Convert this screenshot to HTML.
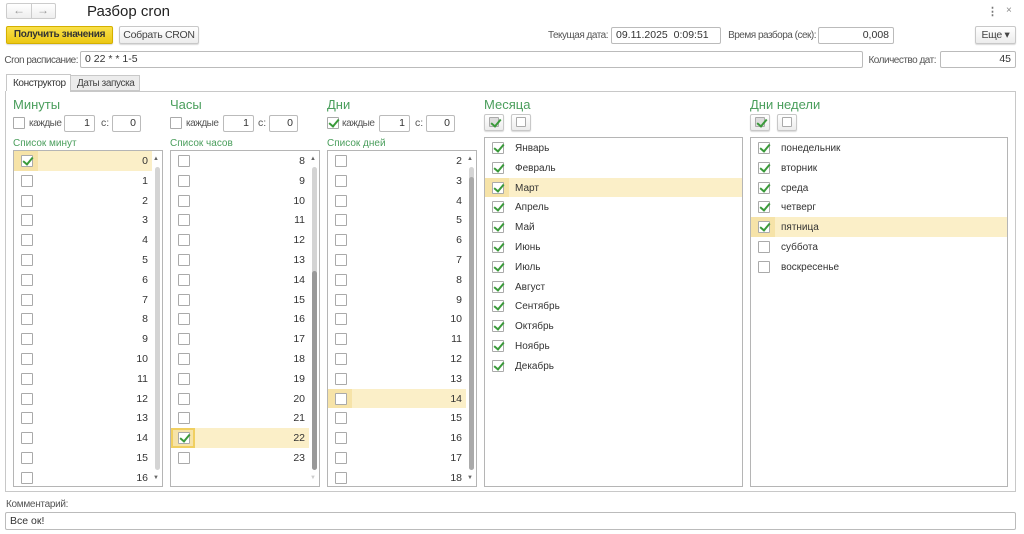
<!DOCTYPE html>
<html><head><meta charset="utf-8"><style>
*{box-sizing:border-box;margin:0;padding:0}
body{width:1024px;height:534px;background:#fff;font-family:"Liberation Sans",sans-serif;font-size:10.5px;color:#333;position:relative;overflow:hidden;white-space:nowrap}
.a{position:absolute}
.inp{position:absolute;border:1px solid #bbb;border-radius:2px;background:#fff;height:17px;line-height:15px;padding:0 4px;color:#333}
.r{text-align:right}
.lab{position:absolute;color:#555;text-align:right;font-size:10px;letter-spacing:-0.5px}
.kd{position:absolute;color:#555;font-size:10px;letter-spacing:-0.5px;top:118px}
.btn{position:absolute;border:1px solid #c8c8c8;border-radius:2px;background:linear-gradient(#fff,#ececec);height:18px;line-height:16px;text-align:center;color:#444;box-shadow:0 1px 1px rgba(0,0,0,.15);letter-spacing:-0.3px}
.g{position:absolute;color:#4a9e5c;font-size:13px}
.gs{position:absolute;color:#4a9e5c;font-size:10px}
.cb{position:absolute;width:12px;height:12px;border:1px solid #aaa;background:#fff;border-radius:1px}
.cb.c::after{content:"";position:absolute;left:3px;top:-1px;width:4px;height:8px;border:solid #3a9a3a;border-width:0 2px 2px 0;transform:rotate(40deg)}
.box{position:absolute;border:1px solid #b5b5b5;background:#fff;overflow:hidden}
.row{position:relative;height:19.8px}
.row .cb{left:7px;top:4px}
.row .n{position:absolute;right:14px;top:4px}
.row .t{position:absolute;left:30px;top:5px;font-size:10px}
.hl{background:#fbefc8}
.hl .cbc{position:absolute;left:0;top:0;width:24px;height:100%;background:#f6e3a8}
.sb{position:absolute;width:5px;border-radius:3px;background:#d4d4d4}
.sbd{background:#999}
.arr{position:absolute;font-size:6px;color:#666}
.ib{position:absolute;width:20px;height:17px;border:1px solid #c8c8c8;border-radius:2px;background:linear-gradient(#fff,#ececec);box-shadow:0 1px 1px rgba(0,0,0,.15)}
</style></head><body>
<div class="a" style="left:6px;top:3px;width:50px;height:16px;border:1px solid #ccc;border-radius:2px;background:linear-gradient(#fff,#eee)"></div>
<div class="a" style="left:31px;top:4px;width:1px;height:14px;background:#ccc"></div>
<div class="a" style="left:13px;top:3px;color:#999;font-size:12px">&#8592;</div>
<div class="a" style="left:37px;top:3px;color:#999;font-size:12px">&#8594;</div>
<div class="a" style="left:87px;top:3px;font-size:15px;color:#222">Разбор cron</div>
<div class="a" style="left:987px;top:5px;color:#777;font-size:11px;font-weight:bold">&#8942;</div>
<div class="a" style="left:1006px;top:5px;color:#888;font-size:10px">×</div>

<div class="btn" style="left:6px;top:26px;width:107px;background:linear-gradient(#f9e04a,#ecc814);border-color:#d4b000;color:#333;font-weight:bold;font-size:10px">Получить значения</div>
<div class="btn" style="left:119px;top:26px;width:80px">Собрать CRON</div>
<div class="lab" style="right:416px;top:30px">Текущая дата:</div>
<div class="inp" style="left:611px;top:27px;width:110px">09.11.2025&nbsp; 0:09:51</div>
<div class="lab" style="right:208px;top:30px">Время разбора (сек):</div>
<div class="inp r" style="left:818px;top:27px;width:76px">0,008</div>
<div class="btn" style="left:975px;top:26px;width:41px">Еще ▾</div>

<div class="lab" style="right:946px;top:55px">Cron расписание:</div>
<div class="inp" style="left:80px;top:51px;width:783px">0 22 * * 1-5</div>
<div class="lab" style="right:88px;top:55px">Количество дат:</div>
<div class="inp r" style="left:940px;top:51px;width:76px">45</div>

<div class="a" style="left:5px;top:91px;width:1011px;height:401px;border:1px solid #c8c8c8"></div>
<div class="a" style="left:6px;top:74px;width:65px;height:18px;border:1px solid #c8c8c8;border-bottom:none;background:#fff;padding:3px 0 0 6px;font-size:10px;letter-spacing:-0.4px">Конструктор</div>
<div class="a" style="left:70px;top:75px;width:70px;height:16px;border:1px solid #c8c8c8;background:#ececec;padding:2px 0 0 6px;color:#444;font-size:10px;letter-spacing:-0.4px">Даты запуска</div>
<div class="a" style="left:6px;top:91px;width:64px;height:1px;background:#fff"></div>

<div class="g" style="left:13px;top:97px">Минуты</div>
<div class="g" style="left:170px;top:97px">Часы</div>
<div class="g" style="left:327px;top:97px">Дни</div>
<div class="g" style="left:484px;top:97px">Месяца</div>
<div class="g" style="left:750px;top:97px">Дни недели</div>

<div class="cb" style="left:13px;top:117px"></div><div class="kd" style="left:29px">каждые</div>
<div class="inp r" style="left:64px;top:115px;width:31px">1</div><div class="a" style="left:101px;top:117px;color:#555">с:</div>
<div class="inp r" style="left:112px;top:115px;width:29px">0</div>
<div class="cb" style="left:170px;top:117px"></div><div class="kd" style="left:186px">каждые</div>
<div class="inp r" style="left:223px;top:115px;width:31px">1</div><div class="a" style="left:258px;top:117px;color:#555">с:</div>
<div class="inp r" style="left:269px;top:115px;width:29px">0</div>
<div class="cb c" style="left:327px;top:117px"></div><div class="kd" style="left:342px">каждые</div>
<div class="inp r" style="left:379px;top:115px;width:31px">1</div><div class="a" style="left:415px;top:117px;color:#555">с:</div>
<div class="inp r" style="left:426px;top:115px;width:29px">0</div>

<div class="ib" style="left:484px;top:114px"><div class="cb c" style="left:4px;top:2px;width:10px;height:10px;background:#ddd"></div></div>
<div class="ib" style="left:511px;top:114px"><div class="cb" style="left:4px;top:2px;width:10px;height:10px"></div></div>
<div class="ib" style="left:750px;top:114px"><div class="cb c" style="left:4px;top:2px;width:10px;height:10px;background:#ddd"></div></div>
<div class="ib" style="left:777px;top:114px"><div class="cb" style="left:4px;top:2px;width:10px;height:10px"></div></div>

<div class="gs" style="left:13px;top:138px">Список минут</div>
<div class="gs" style="left:170px;top:138px">Список часов</div>
<div class="gs" style="left:327px;top:138px">Список дней</div>

<div class="box" style="left:13px;top:150px;width:150px;height:337px">
<div class="row hl" style="margin-right:10px"><div class="cbc"></div><div class="cb c"></div><div class="n" style="right:4px">0</div></div>
<div class="row"><div class="cb"></div><div class="n">1</div></div>
<div class="row"><div class="cb"></div><div class="n">2</div></div>
<div class="row"><div class="cb"></div><div class="n">3</div></div>
<div class="row"><div class="cb"></div><div class="n">4</div></div>
<div class="row"><div class="cb"></div><div class="n">5</div></div>
<div class="row"><div class="cb"></div><div class="n">6</div></div>
<div class="row"><div class="cb"></div><div class="n">7</div></div>
<div class="row"><div class="cb"></div><div class="n">8</div></div>
<div class="row"><div class="cb"></div><div class="n">9</div></div>
<div class="row"><div class="cb"></div><div class="n">10</div></div>
<div class="row"><div class="cb"></div><div class="n">11</div></div>
<div class="row"><div class="cb"></div><div class="n">12</div></div>
<div class="row"><div class="cb"></div><div class="n">13</div></div>
<div class="row"><div class="cb"></div><div class="n">14</div></div>
<div class="row"><div class="cb"></div><div class="n">15</div></div>
<div class="row"><div class="cb"></div><div class="n">16</div></div>
<div class="arr" style="right:3px;top:5px">▲</div><div class="sb" style="right:2px;top:16px;height:303px"></div><div class="arr" style="right:3px;top:324px">▼</div>
</div>

<div class="box" style="left:170px;top:150px;width:150px;height:337px">
<div class="row"><div class="cb"></div><div class="n">8</div></div>
<div class="row"><div class="cb"></div><div class="n">9</div></div>
<div class="row"><div class="cb"></div><div class="n">10</div></div>
<div class="row"><div class="cb"></div><div class="n">11</div></div>
<div class="row"><div class="cb"></div><div class="n">12</div></div>
<div class="row"><div class="cb"></div><div class="n">13</div></div>
<div class="row"><div class="cb"></div><div class="n">14</div></div>
<div class="row"><div class="cb"></div><div class="n">15</div></div>
<div class="row"><div class="cb"></div><div class="n">16</div></div>
<div class="row"><div class="cb"></div><div class="n">17</div></div>
<div class="row"><div class="cb"></div><div class="n">18</div></div>
<div class="row"><div class="cb"></div><div class="n">19</div></div>
<div class="row"><div class="cb"></div><div class="n">20</div></div>
<div class="row"><div class="cb"></div><div class="n">21</div></div>
<div class="row hl" style="margin-right:10px"><div class="cbc" style="border:2px solid #f0cf60;background:#f6e3a8"></div><div class="cb c"></div><div class="n" style="right:4px">22</div></div>
<div class="row"><div class="cb"></div><div class="n">23</div></div>
<div class="arr" style="right:3px;top:5px">▲</div><div class="sb" style="right:2px;top:16px;height:303px"></div><div class="sb sbd" style="right:2px;top:120px;height:199px"></div><div class="arr" style="right:3px;top:324px;color:#ccc">▼</div>
</div>

<div class="box" style="left:327px;top:150px;width:150px;height:337px">
<div class="row"><div class="cb"></div><div class="n">2</div></div>
<div class="row"><div class="cb"></div><div class="n">3</div></div>
<div class="row"><div class="cb"></div><div class="n">4</div></div>
<div class="row"><div class="cb"></div><div class="n">5</div></div>
<div class="row"><div class="cb"></div><div class="n">6</div></div>
<div class="row"><div class="cb"></div><div class="n">7</div></div>
<div class="row"><div class="cb"></div><div class="n">8</div></div>
<div class="row"><div class="cb"></div><div class="n">9</div></div>
<div class="row"><div class="cb"></div><div class="n">10</div></div>
<div class="row"><div class="cb"></div><div class="n">11</div></div>
<div class="row"><div class="cb"></div><div class="n">12</div></div>
<div class="row"><div class="cb"></div><div class="n">13</div></div>
<div class="row hl" style="margin-right:10px"><div class="cbc"></div><div class="cb"></div><div class="n" style="right:4px">14</div></div>
<div class="row"><div class="cb"></div><div class="n">15</div></div>
<div class="row"><div class="cb"></div><div class="n">16</div></div>
<div class="row"><div class="cb"></div><div class="n">17</div></div>
<div class="row"><div class="cb"></div><div class="n">18</div></div>
<div class="arr" style="right:3px;top:5px">▲</div><div class="sb" style="right:2px;top:16px;height:303px"></div><div class="sb" style="right:2px;top:26px;height:293px;background:#aaa"></div><div class="arr" style="right:3px;top:324px">▼</div>
</div>

<div class="box" style="left:484px;top:137px;width:259px;height:350px">
<div class="row"><div class="cb c"></div><div class="t">Январь</div></div>
<div class="row"><div class="cb c"></div><div class="t">Февраль</div></div>
<div class="row hl"><div class="cbc"></div><div class="cb c"></div><div class="t">Март</div></div>
<div class="row"><div class="cb c"></div><div class="t">Апрель</div></div>
<div class="row"><div class="cb c"></div><div class="t">Май</div></div>
<div class="row"><div class="cb c"></div><div class="t">Июнь</div></div>
<div class="row"><div class="cb c"></div><div class="t">Июль</div></div>
<div class="row"><div class="cb c"></div><div class="t">Август</div></div>
<div class="row"><div class="cb c"></div><div class="t">Сентябрь</div></div>
<div class="row"><div class="cb c"></div><div class="t">Октябрь</div></div>
<div class="row"><div class="cb c"></div><div class="t">Ноябрь</div></div>
<div class="row"><div class="cb c"></div><div class="t">Декабрь</div></div>
</div>

<div class="box" style="left:750px;top:137px;width:258px;height:350px">
<div class="row"><div class="cb c"></div><div class="t">понедельник</div></div>
<div class="row"><div class="cb c"></div><div class="t">вторник</div></div>
<div class="row"><div class="cb c"></div><div class="t">среда</div></div>
<div class="row"><div class="cb c"></div><div class="t">четверг</div></div>
<div class="row hl"><div class="cbc"></div><div class="cb c"></div><div class="t">пятница</div></div>
<div class="row"><div class="cb"></div><div class="t">суббота</div></div>
<div class="row"><div class="cb"></div><div class="t">воскресенье</div></div>
</div>

<div class="a" style="left:6px;top:499px;color:#555;font-size:10px;letter-spacing:-0.3px">Комментарий:</div>
<div class="inp" style="left:5px;top:512px;width:1011px;height:18px;line-height:16px">Все ок!</div>
</body></html>
